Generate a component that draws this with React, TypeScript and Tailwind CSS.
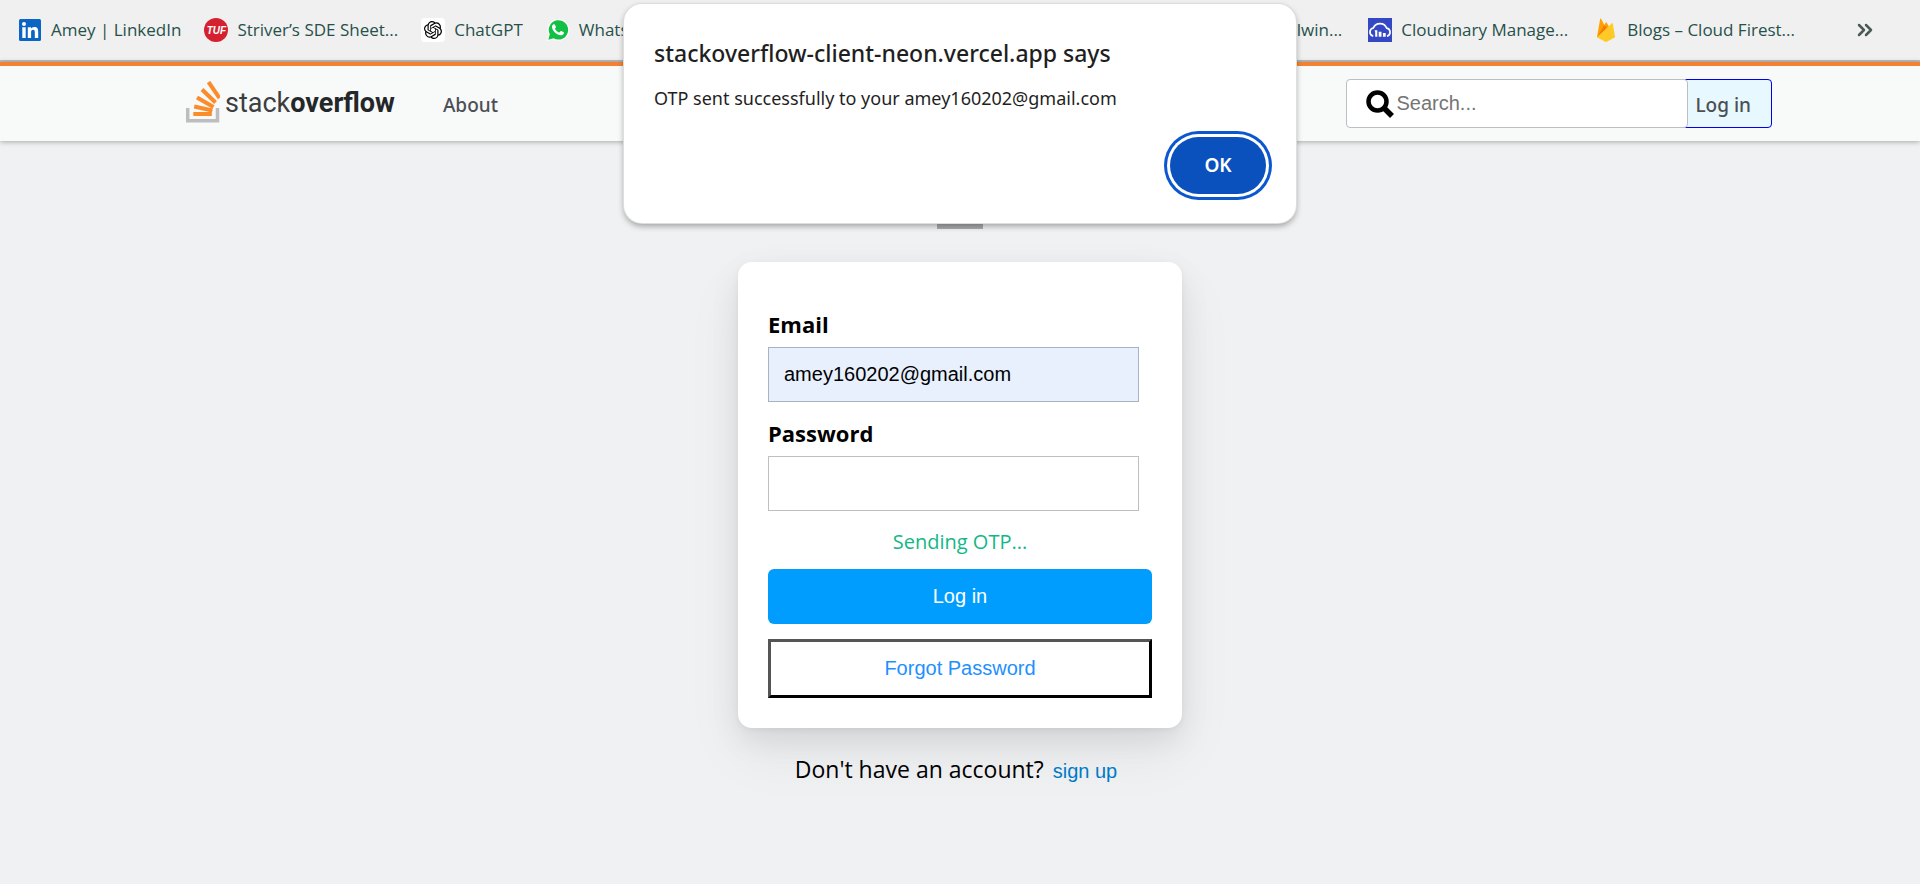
import React from 'react';
import { SiOpenai } from 'react-icons/si';
import { ChevronsRight } from 'lucide-react';

const LinkedInIcon = () => (
  <svg viewBox="0 0 24 24" className="size-6 shrink-0" aria-hidden="true">
    <rect x="1" y="1" width="22" height="22" rx="1.5" fill="#0a66c2" />
    <g fill="#fff">
      <circle cx="6" cy="6" r="2" />
      <path d="M4.3 9.3h3.4V20H4.3zM9.8 9.3h3.2v1.5c.6-1 1.7-1.8 3.3-1.8 3.1 0 3.9 2 3.9 4.8V20h-3.4v-5.6c0-1.4-.3-2.6-1.8-2.6s-1.9 1.1-1.9 2.6V20H9.8z" />
    </g>
  </svg>
);

const TufIcon = () => (
  <span className="flex size-6 shrink-0 items-center justify-center rounded-full bg-[#d5202f] font-['Liberation_Sans',sans-serif] text-[10px] font-bold text-white italic">
    TUF
  </span>
);

const ChatGptIcon = () => (
  <span className="flex size-6 shrink-0 items-center justify-center rounded-[4px] bg-white">
    <SiOpenai className="size-[18px] text-black" aria-hidden="true" />
  </span>
);

const WhatsAppIcon = () => (
  <svg viewBox="0 0 24 24" className="size-6 shrink-0" aria-hidden="true">
    <path d="M1 23l1.7-6A11 11 0 1 1 7 21.4z" fill="#fff" />
    <path d="M2.3 21.7l1.5-5.4A9.7 9.7 0 1 1 7.6 20.3z" fill="#12c144" />
    <path
      d="M8.9 6.8c-.3-.6-.6-.6-1-.6-.9 0-1.9 1-1.9 2.6 0 3.7 4.7 8.5 9 8.5 1.7 0 2.9-1.2 2.9-2.6 0-.4-.1-.5-.5-.7l-2.1-1c-.4-.2-.6-.1-.8.2l-.9 1.1c-.2.3-.5.3-.8.1-1.6-.7-2.9-1.9-3.7-3.4-.2-.3-.1-.5.1-.7l.6-.8c.2-.3.2-.5.1-.8z"
      fill="#fff"
    />
  </svg>
);

const CloudinaryIcon = () => (
  <svg viewBox="0 0 24 24" className="size-6 shrink-0" aria-hidden="true">
    <rect width="24" height="24" fill="#3448c5" />
    <path
      d="M5.2 18.2A4.2 4.2 0 0 1 5.3 10a7.2 7.2 0 0 1 13.4.2 4.1 4.1 0 0 1 .3 8"
      fill="none"
      stroke="#fff"
      strokeWidth="1.7"
    />
    <path d="M6.5 12.3h2.8v6.5H7.2V14zM10.7 13.7h2.8v5.1h-2.8zM14.9 14.9h2.8v3.9h-2.8z" fill="#fff" />
  </svg>
);

const FirebaseIcon = () => (
  <svg viewBox="0 0 24 24" className="size-6 shrink-0" aria-hidden="true">
    <path d="M3 19.3L6.2.8c.1-.4.6-.5.8-.1l3.4 6.3 1.4-2.6c.2-.3.6-.3.8 0L21 19.3z" fill="#ffa000" />
    <path d="M13.6 10.4L10.4 7 3 19.3z" fill="#f57c00" />
    <path d="M3 19.3L17.9 5.2c.3-.3.8-.1.9.3L21 19.3l-8.1 4.4c-.5.3-1.2.3-1.7 0z" fill="#ffca28" />
  </svg>
);

type BookmarkProps = { icon?: React.ReactNode; label: string };

const Bookmark = ({ icon, label }: BookmarkProps) => (
  <a href="#" className="flex items-center gap-[9px] whitespace-nowrap">
    {icon}
    <span>{label}</span>
  </a>
);

const BookmarksBar = () => (
  <nav
    aria-label="Bookmarks"
    className="flex h-[62px] items-center justify-between border-b-2 border-[#b9bcbb] bg-[#f0f0f0] pr-[43px] pl-[18px] text-[17px] text-[#27504b]"
  >
    <div className="flex items-center gap-[23px]">
      <Bookmark icon={<LinkedInIcon />} label="Amey | LinkedIn" />
      <Bookmark icon={<TufIcon />} label="Striver’s SDE Sheet..." />
      <Bookmark icon={<ChatGptIcon />} label="ChatGPT" />
      <Bookmark icon={<WhatsAppIcon />} label="WhatsApp" />
    </div>
    <div className="flex items-center gap-[26px]">
      <Bookmark label="Tailwin..." />
      <Bookmark icon={<CloudinaryIcon />} label="Cloudinary Manage..." />
      <Bookmark icon={<FirebaseIcon />} label="Blogs – Cloud Firest..." />
      <button type="button" aria-label="More bookmarks" className="pl-8 text-[#4b5a57]">
        <ChevronsRight className="size-6" strokeWidth={2.5} />
      </button>
    </div>
  </nav>
);

const Logo = () => (
  <a href="#" className="flex items-center gap-[5px] pb-1" aria-label="stack overflow">
    <svg viewBox="0 0 34 42" className="h-[42px] w-[34px]" aria-hidden="true">
      <path d="M1.7 27v12.7h29.8V27" fill="none" stroke="#bdbdbd" strokeWidth="3.5" />
      <g stroke="#fb8c2a" strokeWidth="4">
        <path d="M7.3 33h18.5" />
        <path d="M8.2 25.5l18.2 4" />
        <path d="M11 16.5l16.500 9.500" />
        <path d="M16 8.5l13.5 13" />
        <path d="M22.5 1l11 16" />
      </g>
    </svg>
    <span className="pt-1 font-[Roboto,sans-serif] text-[27px] text-[#3b3e40]">
      stack<b className="text-[#242729]">overflow</b>
    </span>
  </a>
);

const SiteHeader = () => (
  <header className="flex h-[79px] items-center justify-between border-t-4 border-[#f48034] bg-[#f8f9f9] pr-[148px] pl-[186px] shadow-[0_1px_5px_rgba(0,0,0,0.3)]">
    <div className="flex items-center gap-12">
      <Logo />
      <a href="#" className="pt-1 font-['Noto_Sans',sans-serif] text-[19px] font-medium text-[#4c5054]">
        About
      </a>
    </div>
    <div className="flex h-[49px]">
      <label className="z-10 flex w-[342px] items-center gap-[2px] rounded-[4px] border border-[#babfc4] bg-white pl-[19px]">
        <svg viewBox="0 0 28 28" className="size-7 shrink-0" aria-hidden="true">
          <circle cx="11.5" cy="11.5" r="9" fill="none" stroke="#000" strokeWidth="4.5" />
          <path d="M18 18l8 8" stroke="#000" strokeWidth="5.5" />
        </svg>
        <input
          type="search"
          aria-label="Search"
          placeholder="Search..."
          className="min-w-0 flex-1 pb-[2px] font-['Liberation_Sans',Arial,sans-serif] text-[20px] outline-none placeholder:text-[#757575]"
        />
      </label>
      <a
        href="#"
        className="-ml-[6px] flex items-center rounded-[4px] border border-[#0000ee] bg-[#e7f8fe] pt-1 pr-5 pl-3 font-['Noto_Sans',sans-serif] text-[19px] font-medium text-[#4c5054]"
      >
        Log in
      </a>
    </div>
  </header>
);

const fieldClass =
  "h-[55px] w-[371px] border px-[15px] font-['Liberation_Sans',Arial,sans-serif] text-[20px] text-black";

const LoginForm = () => (
  <main className="flex flex-col items-center pt-[83px]">
    <div className="h-[5px] w-[46px] bg-[#a9acac]" />
    <form
      onSubmit={(e) => e.preventDefault()}
      className="mt-[33px] flex w-[444px] flex-col rounded-[14px] bg-white p-[30px] pt-[45px] shadow-[0_12px_30px_rgba(0,0,0,0.08),0_25px_60px_rgba(0,0,0,0.06),0_2px_6px_rgba(0,0,0,0.05)]"
    >
      <label htmlFor="email" className="pb-[6px] text-[22px] leading-[34px] font-bold">
        Email
      </label>
      <input
        id="email"
        type="email"
        defaultValue="amey160202@gmail.com"
        className={`${fieldClass} border-[#a9b2c0] bg-[#e8f0fe]`}
      />
      <label htmlFor="password" className="mt-[14px] pb-[6px] text-[22px] leading-[34px] font-bold">
        Password
      </label>
      <input id="password" type="password" className={`${fieldClass} border-[#bfbfbf] bg-white`} />
      <p className="mt-[11px] mb-[7px] text-center text-[20px] leading-[40px] text-[#12b886]">Sending OTP...</p>
      <button
        type="submit"
        className="h-[55px] rounded-[6px] bg-[#009dff] pb-[2px] font-['Liberation_Sans',Arial,sans-serif] text-[20px] text-white"
      >
        Log in
      </button>
      <button
        type="button"
        className="mt-[15px] h-[59px] border-[3px] border-t-[#555] border-r-black border-b-black border-l-[#555] pb-[2px] font-['Liberation_Sans',Arial,sans-serif] text-[20px] text-[#1e90ff]"
      >
        Forgot Password
      </button>
    </form>
    <p className="mt-[23px] flex items-baseline gap-[9px] pr-2 text-[23px] leading-[36px]">
      Don't have an account?
      <button type="button" className="font-['Liberation_Sans',Arial,sans-serif] text-[20px] text-[#007ac6]">
        sign up
      </button>
    </p>
  </main>
);

const AlertDialog = () => (
  <div
    role="alertdialog"
    aria-labelledby="alert-title"
    aria-describedby="alert-text"
    className="absolute top-1 left-1/2 z-20 flex w-[672px] -translate-x-1/2 flex-col rounded-[18px] bg-white px-[30px] pt-[31px] pb-[29px] font-['Noto_Sans',sans-serif] text-[#1f1f1f] shadow-[0_0_0_1px_#dcdddd,0_3px_6px_rgba(0,0,0,0.35)]"
  >
    <h2 id="alert-title" className="text-[23px] leading-[36px] font-medium">
      stackoverflow-client-neon.vercel.app says
    </h2>
    <p id="alert-text" className="mt-[13px] text-[18px] leading-[28px]">
      OTP sent successfully to your amey160202@gmail.com
    </p>
    <button
      type="button"
      className="mt-[25px] h-[57px] w-[96px] self-end rounded-full bg-[#0b51be] text-[19px] font-semibold text-white ring-3 ring-[#0b57d0] ring-offset-3 ring-offset-white"
    >
      OK
    </button>
  </div>
);

export default function App() {
  return (
    <div className="relative min-h-screen bg-[#f0f1f3] font-['Open_Sans','Noto_Sans',sans-serif] text-black">
      <BookmarksBar />
      <SiteHeader />
      <LoginForm />
      <AlertDialog />
    </div>
  );
}
